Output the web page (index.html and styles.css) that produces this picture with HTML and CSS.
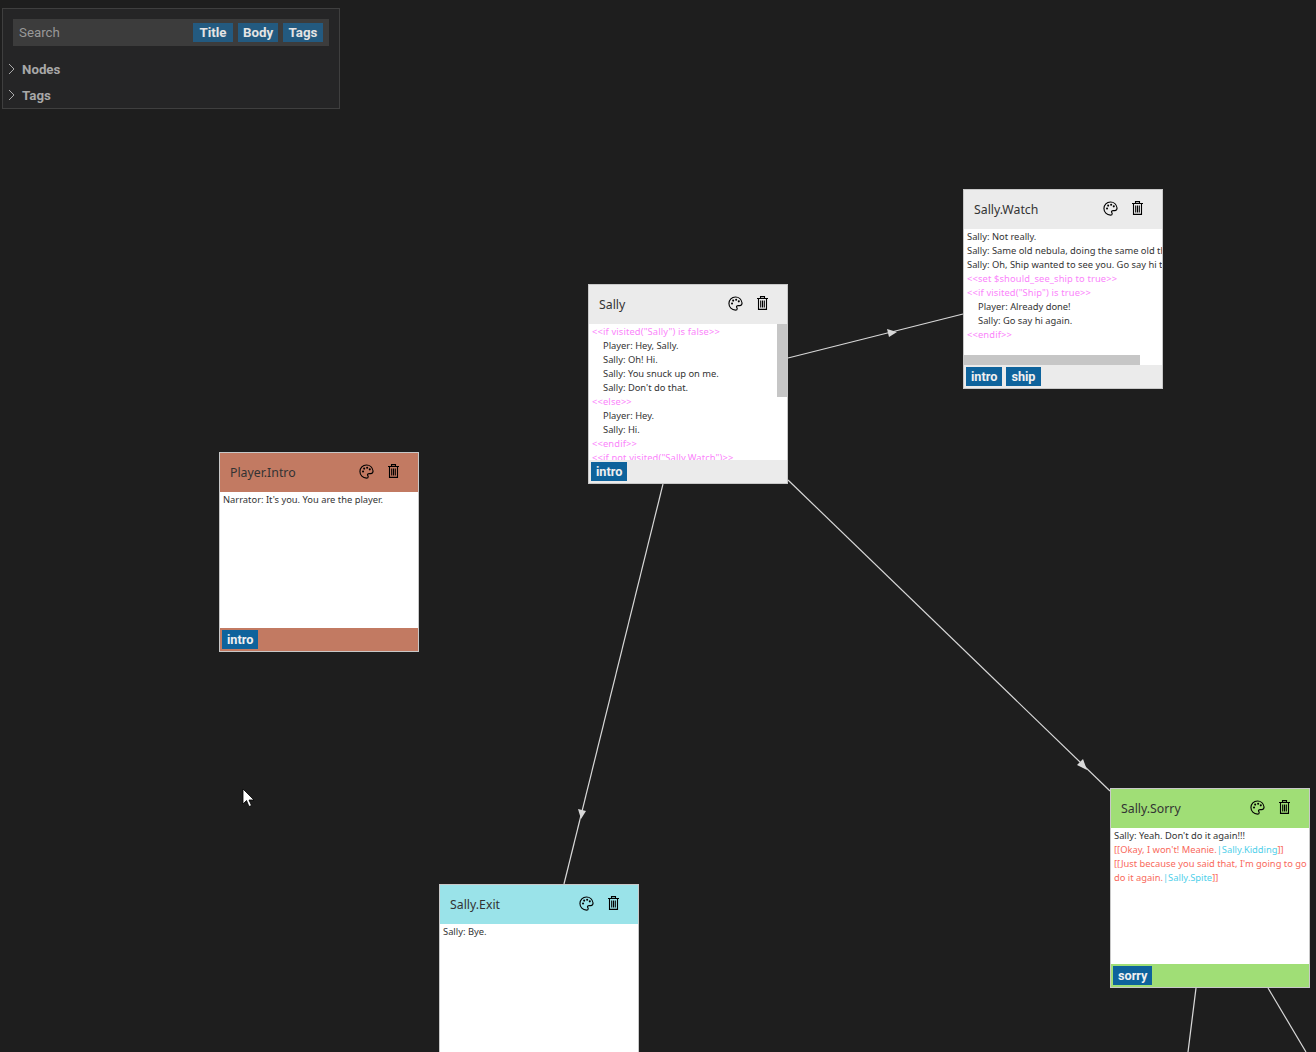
FILE: index.html
```html
<!DOCTYPE html>
<html lang="en">
<head>
    <meta charset="UTF-8">
    <meta name="viewport" content="width=device-width, initial-scale=1.0">
    <title>Yarn Graph</title>
    <link rel="stylesheet" href="styles.css">
</head>
<body>
    <svg width="0" height="0" class="defs">
        <symbol id="icon-palette" viewBox="0 0 16 16">
            <path d="M8 1C4 1 1 4 1 8s3 7 7 7c1.200 0 1.800-.7 1.800-1.500 0-.5-.3-.8-.5-1.200-.3-.5-.3-1.100 0-1.500.4-.5 1-.6 1.700-.6h1.500c1.500 0 2.500-1.200 2.500-2.700C14.500 3.600 11.500 1 8 1z" fill="none" stroke="#000" stroke-width="1.200"/>
            <circle cx="4.300" cy="8" r="1.100"/>
            <circle cx="5.500" cy="4.900" r="1.100"/>
            <circle cx="8.700" cy="3.900" r="1.100"/>
            <circle cx="11.500" cy="5.700" r="1.100"/>
        </symbol>
        <symbol id="icon-trash" viewBox="0 0 11 14">
            <path d="M0 2.500h11M3.500 2.500V.6h4v1.900M1.500 2.500v10.900h8V2.500M3.700 4.500v7M5.500 4.500v7M7.300 4.500v7" fill="none" stroke="#000" stroke-width="1.100"/>
        </symbol>
    </svg>

    <div class="canvas">
        <svg class="links" width="1316" height="1052">
            <line x1="788" y1="358" x2="963" y2="314"/>
            <line x1="663" y1="484" x2="564" y2="884"/>
            <line x1="788" y1="480" x2="1110" y2="791"/>
            <line x1="1196" y1="988" x2="1188" y2="1052"/>
            <line x1="1268" y1="988" x2="1306" y2="1052"/>
            <polygon points="897,332 887,329 889,337"/>
            <polygon points="581,819 578,809 586,811"/>
            <polygon points="1087,770 1077,765 1083,759"/>
        </svg>

        <div class="panel">
            <div class="search">
                <span class="search-label">Search</span>
                <span class="search-btn">Title</span>
                <span class="search-btn">Body</span>
                <span class="search-btn">Tags</span>
            </div>
            <div class="section"><svg class="chevron" width="7" height="12" viewBox="0 0 7 12"><path d="M1 1l5 5-5 5" fill="none" stroke="#aaa"/></svg>Nodes</div>
            <div class="section"><svg class="chevron" width="7" height="12" viewBox="0 0 7 12"><path d="M1 1l5 5-5 5" fill="none" stroke="#aaa"/></svg>Tags</div>
        </div>

        <div class="node node-sally">
            <div class="node-head">
                <span class="node-title">Sally</span>
                <svg class="icon-palette"><use href="#icon-palette"/></svg>
                <svg class="icon-trash"><use href="#icon-trash"/></svg>
            </div>
            <div class="node-body">
                <div class="cmd">&lt;&lt;if visited("Sally") is false&gt;&gt;</div>
                <div class="in">Player: Hey, Sally.</div>
                <div class="in">Sally: Oh! Hi.</div>
                <div class="in">Sally: You snuck up on me.</div>
                <div class="in">Sally: Don't do that.</div>
                <div class="cmd">&lt;&lt;else&gt;&gt;</div>
                <div class="in">Player: Hey.</div>
                <div class="in">Sally: Hi.</div>
                <div class="cmd">&lt;&lt;endif&gt;&gt;</div>
                <div class="cmd">&lt;&lt;if not visited("Sally.Watch")&gt;&gt;</div>
                <div class="scroll-y"></div>
            </div>
            <div class="node-foot"><span class="tag">intro</span></div>
        </div>

        <div class="node node-watch">
            <div class="node-head">
                <span class="node-title">Sally.Watch</span>
                <svg class="icon-palette"><use href="#icon-palette"/></svg>
                <svg class="icon-trash"><use href="#icon-trash"/></svg>
            </div>
            <div class="node-body">
                <div>Sally: Not really.</div>
                <div>Sally: Same old nebula, doing the same old thing.</div>
                <div>Sally: Oh, Ship wanted to see you. Go say hi to her.</div>
                <div class="cmd">&lt;&lt;set $should_see_ship to true&gt;&gt;</div>
                <div class="cmd">&lt;&lt;if visited("Ship") is true&gt;&gt;</div>
                <div class="in">Player: Already done!</div>
                <div class="in">Sally: Go say hi again.</div>
                <div class="cmd">&lt;&lt;endif&gt;&gt;</div>
                <div class="scroll-x"></div>
            </div>
            <div class="node-foot"><span class="tag">intro</span><span class="tag">ship</span></div>
        </div>

        <div class="node node-player">
            <div class="node-head">
                <span class="node-title">Player.Intro</span>
                <svg class="icon-palette"><use href="#icon-palette"/></svg>
                <svg class="icon-trash"><use href="#icon-trash"/></svg>
            </div>
            <div class="node-body">
                <div>Narrator: It's you. You are the player.</div>
            </div>
            <div class="node-foot"><span class="tag">intro</span></div>
        </div>

        <div class="node node-exit">
            <div class="node-head">
                <span class="node-title">Sally.Exit</span>
                <svg class="icon-palette"><use href="#icon-palette"/></svg>
                <svg class="icon-trash"><use href="#icon-trash"/></svg>
            </div>
            <div class="node-body">
                <div>Sally: Bye.</div>
            </div>
            <div class="node-foot"><span class="tag">exit</span></div>
        </div>

        <div class="node node-sorry">
            <div class="node-head">
                <span class="node-title">Sally.Sorry</span>
                <svg class="icon-palette"><use href="#icon-palette"/></svg>
                <svg class="icon-trash"><use href="#icon-trash"/></svg>
            </div>
            <div class="node-body">
                <div>Sally: Yeah. Don't do it again!!!</div>
                <div class="opt">[[Okay, I won't! Meanie.<span class="dest">|Sally.Kidding</span>]]</div>
                <div class="opt">[[Just because you said that, I'm going to go</div>
                <div class="opt">do it again.<span class="dest">|Sally.Spite</span>]]</div>
            </div>
            <div class="node-foot"><span class="tag">sorry</span></div>
        </div>

        <svg class="cursor" width="13" height="20" viewBox="0 0 13 20"><path d="M1 1v15l3.500-3.500 2.500 6 2.500-1-2.500-5.500h5z" fill="#fff" stroke="#000" stroke-width=".8"/></svg>
    </div>
</body>
</html>
```

FILE: styles.css
```css
html,
body {
    margin: 0;
    padding: 0;
    height: 100%;
    overflow: hidden;
    background-color: #1e1e1e;
}

.defs {
    position: absolute;
}

.canvas {
    position: relative;
    width: 1316px;
    height: 1052px;
    overflow: hidden;
}

.links {
    position: absolute;
    left: 0;
    top: 0;
}

.links line {
    stroke: #d8d8d8;
    stroke-width: 1.200;
}

.links polygon {
    fill: #d8d8d8;
}

.cursor {
    position: absolute;
    left: 242px;
    top: 788px;
}

/* search panel */
.panel {
    position: absolute;
    left: 2px;
    top: 8px;
    width: 336px;
    height: 99px;
    background-color: #252526;
    border: 1px solid #3f3f3f;
    font-family: Roboto, "Liberation Sans", sans-serif;
}

.search {
    display: flex;
    align-items: center;
    gap: 5px;
    height: 27px;
    margin: 10px;
    padding: 0 6px 0 6px;
    background-color: #3c3c3c;
}

.search-label {
    flex: 1;
    font-size: 13.300px;
    color: #999;
}

.search-btn {
    width: 40px;
    height: 19px;
    line-height: 19px;
    text-align: center;
    background-color: #235a80;
    color: #e4e4e4;
    font-size: 13.300px;
    font-weight: bold;
}

.section {
    display: flex;
    align-items: center;
    gap: 7px;
    height: 26px;
    padding-left: 5px;
    color: #a8a8a8;
    font-size: 13.300px;
    font-weight: bold;
}

/* nodes */
.node {
    position: absolute;
    display: flex;
    flex-direction: column;
    box-sizing: border-box;
    width: 200px;
    height: 200px;
    background-color: #ebebeb;
    border: 1px solid #c8c8c8;
    font-family: "Noto Sans", "Open Sans", sans-serif;
}

.node-sally { left: 588px; top: 284px; }
.node-watch { left: 963px; top: 189px; }
.node-player { left: 219px; top: 452px; background-color: #c27a62; }
.node-exit { left: 439px; top: 884px; background-color: #9ae3e9; }
.node-sorry { left: 1110px; top: 788px; background-color: #a0de76; }

.node-head {
    display: flex;
    align-items: center;
    height: 39px;
    padding-left: 10px;
    flex-shrink: 0;
}

.node-title {
    flex: 1;
    font-size: 12.300px;
    color: #333;
}

.icon-palette {
    width: 15px;
    height: 15px;
    margin-right: 14px;
    margin-top: -3px;
}

.icon-trash {
    width: 11px;
    height: 14px;
    margin-right: 19px;
    margin-top: -4px;
}

.node-body {
    position: relative;
    flex: 1;
    overflow: hidden;
    padding: 1px 0 0 3px;
    background-color: #fff;
    font-size: 9.350px;
    line-height: 14px;
    color: #333;
    white-space: nowrap;
}

.in {
    padding-left: 11px;
}

.cmd {
    color: #fb84fb;
    letter-spacing: .13px;
}

.opt {
    color: #f9695c;
}

.dest {
    color: #4fd0ea;
}

.scroll-y {
    position: absolute;
    right: 0;
    top: 0;
    width: 10px;
    height: 73px;
    background-color: #c6c6c6;
}

.scroll-x {
    position: absolute;
    left: 0;
    bottom: 0;
    width: 176px;
    height: 10px;
    background-color: #c6c6c6;
}

.node-foot {
    display: flex;
    align-items: center;
    gap: 4px;
    height: 23px;
    padding-left: 2px;
    flex-shrink: 0;
}

.tag {
    height: 19px;
    line-height: 19px;
    padding: 0 5px;
    background-color: #0e639c;
    color: #f0f0f0;
    font-family: Roboto, "Liberation Sans", sans-serif;
    font-size: 12.700px;
    font-weight: bold;
}
```
